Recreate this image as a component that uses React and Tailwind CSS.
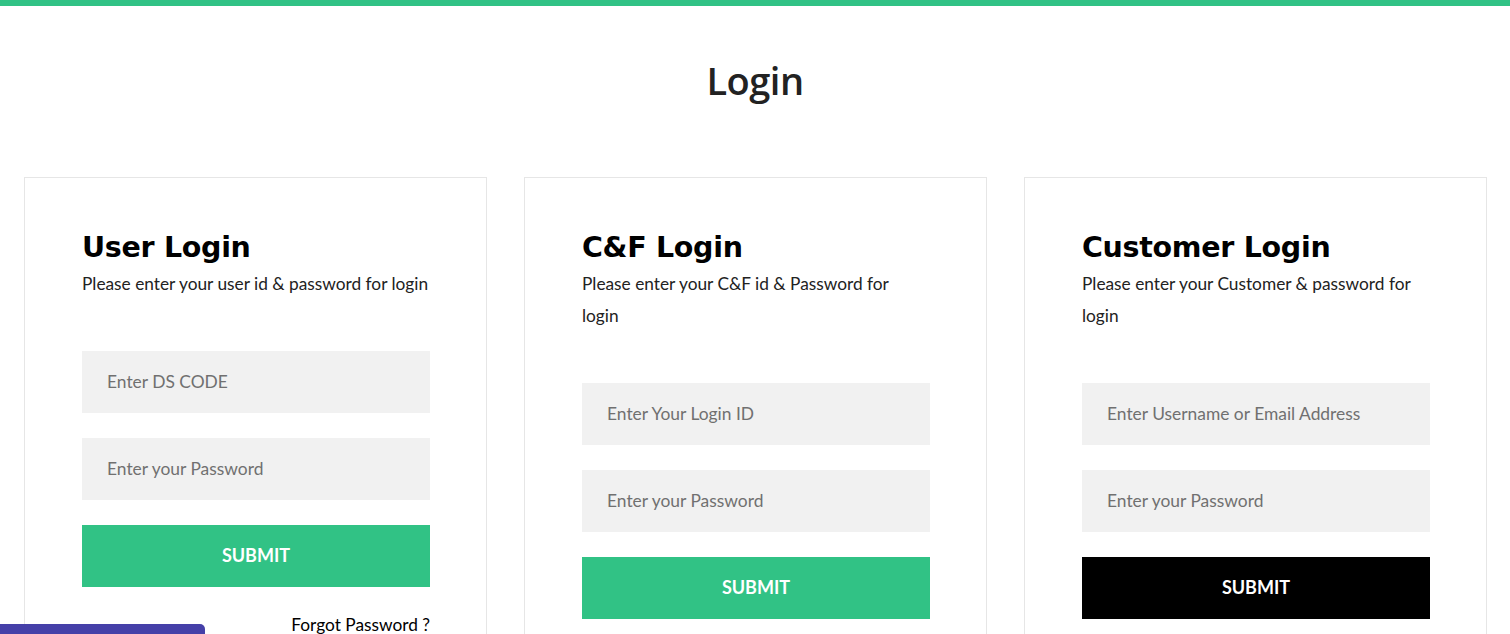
const cards = [
  {
    title: 'User Login',
    text: 'Please enter your user id & password for login',
    fields: ['Enter DS CODE', 'Enter your Password'],
    button: 'bg-[#31c285]',
    forgot: true,
  },
  {
    title: 'C&F Login',
    text: 'Please enter your C&F id & Password for login',
    fields: ['Enter Your Login ID', 'Enter your Password'],
    button: 'bg-[#31c285]',
    narrow: true,
  },
  {
    title: 'Customer Login',
    text: 'Please enter your Customer & password for login',
    fields: ['Enter Username or Email Address', 'Enter your Password'],
    button: 'bg-black',
  },
];

function LoginCard({ title, text, fields, button, forgot, narrow }) {
  return (
    <div className="border border-[#e6e6e6] pl-[57px] pr-[56px] pt-[50px] pb-10">
      <h2 className="text-[28.5px] leading-[40px] font-bold text-black font-['DejaVu_Sans',sans-serif] tracking-[-0.3px]">
        {title}
      </h2>
      <p className={`text-[17.3px] leading-[32px] text-[#222] ${narrow ? 'pr-4' : ''}`}>{text}</p>
      <form className="mt-[50.5px] flex flex-col gap-[25px]" onSubmit={(e) => e.preventDefault()}>
        {fields.map((f) => (
          <input
            key={f}
            type={f.includes('Password') ? 'password' : 'text'}
            placeholder={f}
            className="h-[62px] bg-[#f1f1f1] px-[25px] text-[17.4px] text-[#333] placeholder:text-[#707070] outline-none"
          />
        ))}
        <button
          type="submit"
          className={`${button} h-[62px] text-white text-[18px] font-bold uppercase`}
        >
          Submit
        </button>
      </form>
      {forgot && (
        <div className="mt-[26px] text-right text-[17.3px] leading-[24px] text-black">Forgot Password ?</div>
      )}
    </div>
  );
}

export default function App() {
  return (
    <div className="min-h-screen bg-white font-['Lato',sans-serif]">
      <div className="h-[6px] bg-[#31c285]" />
      <h1 className="mt-[51px] text-center text-[38px] leading-[46px] font-semibold text-[#222] font-['Open_Sans',sans-serif] tracking-[-0.5px]">
        Login
      </h1>
      <div className="mt-[74px] pl-[24px] pr-[23px] grid grid-cols-3 gap-[37px]">
        {cards.map((c) => (
          <LoginCard key={c.title} {...c} />
        ))}
      </div>
      <div className="fixed left-0 bottom-[-30px] w-[205px] h-[40px] bg-[#4540a8] rounded-tr-[5px]" />
    </div>
  );
}
